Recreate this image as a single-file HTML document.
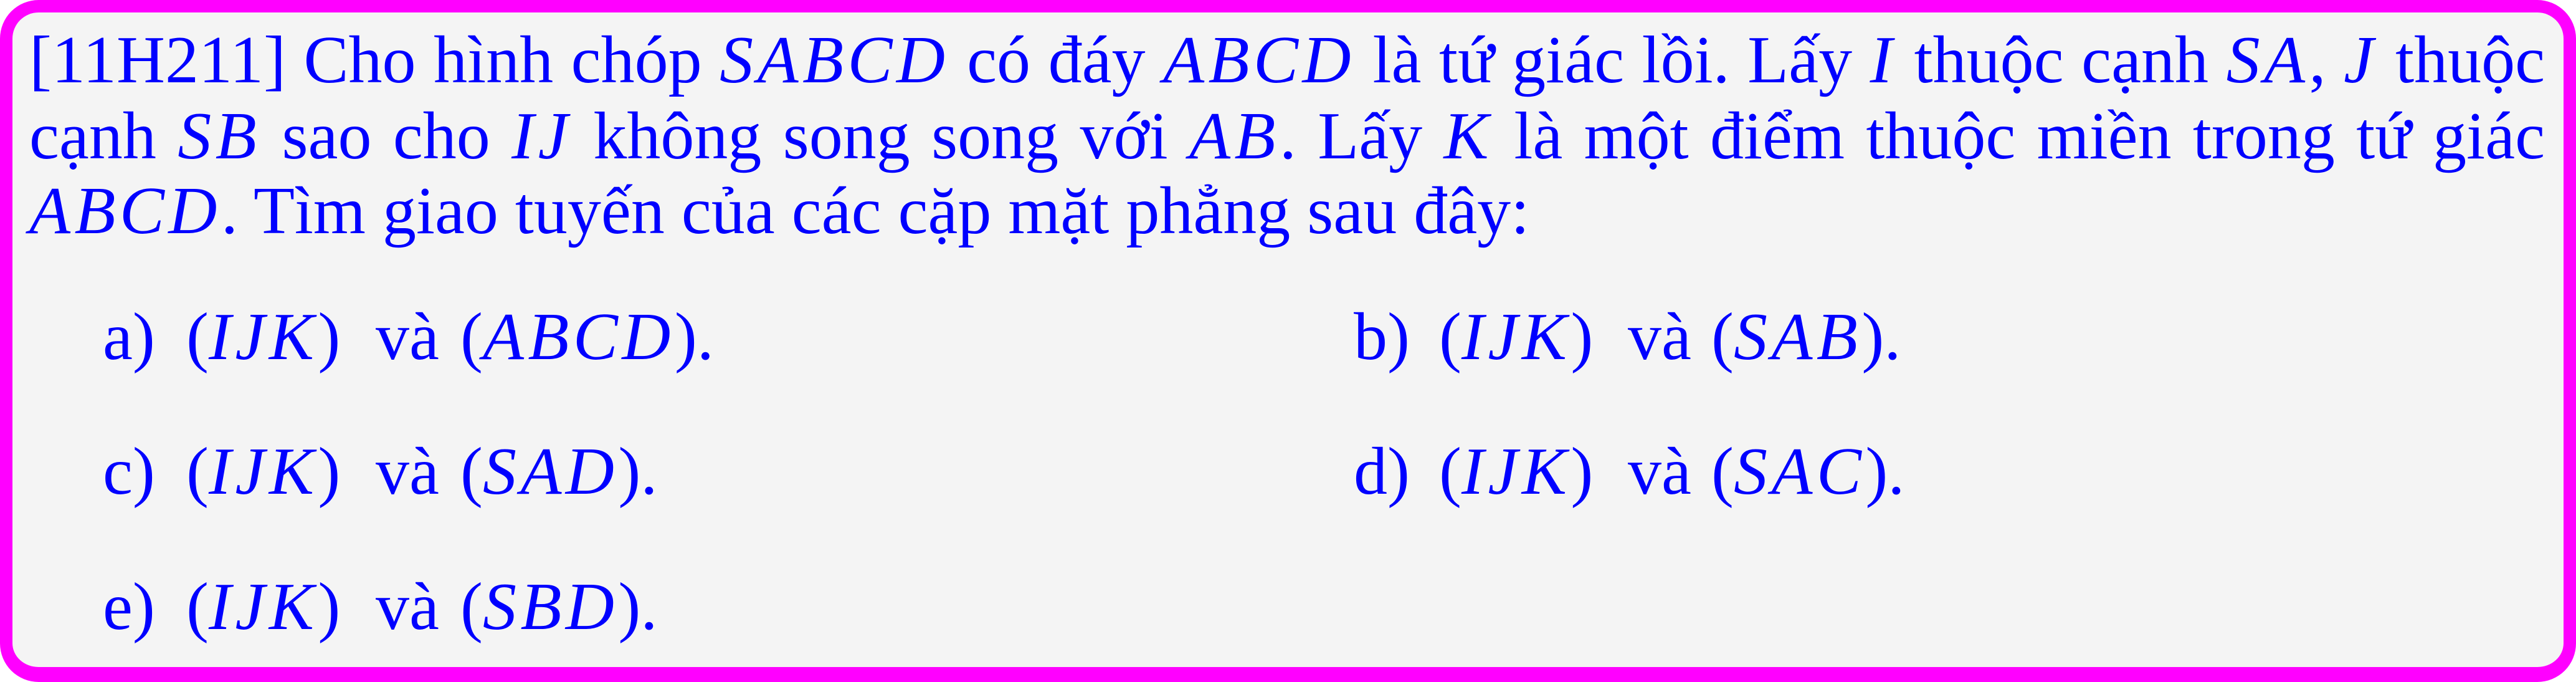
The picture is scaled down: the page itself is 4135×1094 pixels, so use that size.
<!DOCTYPE html>
<html><head><meta charset="utf-8"><style>
html,body{margin:0;padding:0;}
body{width:4135px;height:1094px;position:relative;overflow:hidden;background:#fff;font-family:"Liberation Serif","DejaVu Serif",serif;color:#0000ff;}
.box{position:absolute;left:0;top:0;width:4135px;height:1094px;box-sizing:border-box;border:20px solid #ff00ff;border-bottom-width:24px;border-radius:62px;background:#f4f4f4;}
.ln{position:absolute;left:47px;width:4038px;font-size:108px;line-height:122px;white-space:nowrap;text-align:justify;text-align-last:justify;}
.ln.l{text-align-last:left;}
i{font-style:italic;letter-spacing:0.06em;}
.it{position:absolute;font-size:108px;line-height:122px;white-space:nowrap;}
</style></head><body>
<div class="box"></div>
<div class="ln" style="top:36px">[11H211] Cho hình chóp <i>SABCD</i> có đáy <i>ABCD</i> là tứ giác lồi. Lấy <i>I</i> thuộc cạnh <i>SA</i>, <i>J</i> thuộc</div>
<div class="ln" style="top:158px">cạnh <i>SB</i> sao cho <i>IJ</i> không song song với <i>AB</i>. Lấy <i>K</i> là một điểm thuộc miền trong tứ giác</div>
<div class="ln l" style="top:278px"><i>ABCD</i>. Tìm giao tuyến của các cặp mặt phẳng sau đây:</div>

<div class="it" style="left:165px;top:480px">a)</div><div class="it" style="left:299px;top:480px">(<i>IJK</i>)</div><div class="it" style="left:603px;top:480px">và</div><div class="it" style="left:739px;top:480px">(<i>ABCD</i>).</div>
<div class="it" style="left:2173px;top:480px">b)</div><div class="it" style="left:2310px;top:480px">(<i>IJK</i>)</div><div class="it" style="left:2613px;top:480px">và</div><div class="it" style="left:2747px;top:480px">(<i>SAB</i>).</div>
<div class="it" style="left:165px;top:696px">c)</div><div class="it" style="left:299px;top:696px">(<i>IJK</i>)</div><div class="it" style="left:603px;top:696px">và</div><div class="it" style="left:739px;top:696px">(<i>SAD</i>).</div>
<div class="it" style="left:2173px;top:696px">d)</div><div class="it" style="left:2310px;top:696px">(<i>IJK</i>)</div><div class="it" style="left:2613px;top:696px">và</div><div class="it" style="left:2747px;top:696px">(<i>SAC</i>).</div>
<div class="it" style="left:165px;top:913px">e)</div><div class="it" style="left:299px;top:913px">(<i>IJK</i>)</div><div class="it" style="left:603px;top:913px">và</div><div class="it" style="left:739px;top:913px">(<i>SBD</i>).</div>
</body></html>
